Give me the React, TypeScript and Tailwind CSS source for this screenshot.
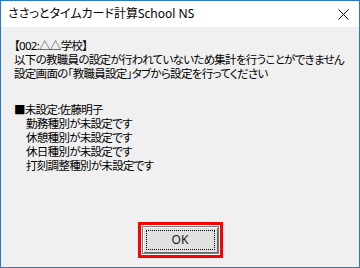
import React from "react";

const lines = [
  "【002:△△学校】",
  "以下の教職員の設定が行われていないため集計を行うことができません",
  "設定画面の「教職員設定」タブから設定を行ってください",
];

const missing = [
  "勤務種別が未設定です",
  "休憩種別が未設定です",
  "休日種別が未設定です",
  "打刻調整種別が未設定です",
];

export default function App() {
  return (
    <div className="w-[360px] h-[268px] flex flex-col border border-[#2a7bc4] bg-[#f0f0f0] text-black font-['Noto_Sans','Noto_Sans_CJK_JP',sans-serif] [font-feature-settings:'palt'] text-[12px] overflow-hidden">
      {/* タイトルバー */}
      <div className="h-[26px] bg-white flex items-center justify-between pl-[7px] pr-[10px] shrink-0">
        <span className="leading-none">ささっとタイムカード計算School NS</span>
        <svg width="11" height="11" viewBox="0 0 11 11" className="text-black">
          <path d="M0.5 0.5 L10.5 10.5 M10.5 0.5 L0.5 10.5" stroke="currentColor" strokeWidth="1" />
        </svg>
      </div>

      {/* 本文 */}
      <div className="flex-1 flex flex-col">
        <div className="pl-[13px] pt-[12px] leading-[14px] text-[11.5px] tracking-[-0.7px] whitespace-nowrap">
          {lines.map((t) => (
            <div key={t}>{t}</div>
          ))}
          <div className="h-[22px]" />
          <div>■未設定:佐藤明子</div>
          {missing.map((t) => (
            <div key={t} className="pl-[12px]">{t}</div>
          ))}
        </div>

        <div className="mt-auto mb-[9px] flex justify-center">
          <div className="border-[3px] border-[#ff0000] p-px bg-white">
            <button className="w-[77px] h-[28px] bg-[#e1e1e1] border border-[#7a7a7a] shadow-[inset_1px_1px_0_#ffffff,inset_-1px_-1px_0_#696969] p-[3px] flex">
              <span className="flex-1 border border-dotted border-black flex items-center justify-center leading-none text-[12px] text-[#1a1a1a]">
                OK
              </span>
            </button>
          </div>
        </div>
      </div>
    </div>
  );
}
